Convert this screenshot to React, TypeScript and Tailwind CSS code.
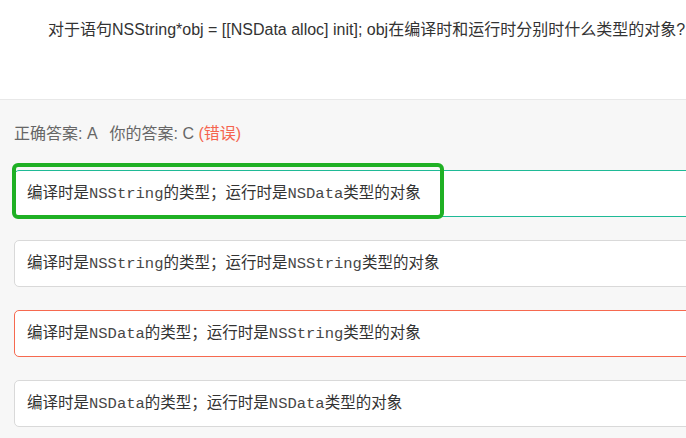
import React from 'react';

interface Option {
  compile: string;
  runtime: string;
  state: 'correct' | 'wrong' | 'normal';
}

const OPTIONS: Option[] = [
  { compile: 'NSString', runtime: 'NSData', state: 'correct' },
  { compile: 'NSString', runtime: 'NSString', state: 'normal' },
  { compile: 'NSData', runtime: 'NSString', state: 'wrong' },
  { compile: 'NSData', runtime: 'NSData', state: 'normal' },
];

const sans = 'font-["Liberation_Sans","Noto_Sans_CJK_SC",sans-serif]';

const Code: React.FC<{ children: React.ReactNode }> = ({ children }) => (
  <span className='font-["Liberation_Mono","Noto_Sans_CJK_SC",monospace] text-[15.5px] text-[#484848]'>{children}</span>
);

const OptionCard: React.FC<{ option: Option }> = ({ option }) => {
  const border =
    option.state === 'correct'
      ? 'border-[#1fba96]'
      : option.state === 'wrong'
        ? 'border-[#f6694f]'
        : 'border-[#d9d9d9]';

  return (
    <div className={`relative h-[47px] flex items-center px-[12px] bg-white border rounded-[5px] ${border}`}>
      <span className="text-[15.5px] text-[#333] leading-none whitespace-nowrap">
        编译时是<Code>{option.compile}</Code>的类型；运行时是<Code>{option.runtime}</Code>类型的对象
      </span>
      {/* highlight frame over the right answer */}
      {option.state === 'correct' && (
        <div className="absolute left-[-3px] top-[-8px] w-[432px] h-[56px] border-[4px] border-[#1fb024] rounded-[6px] pointer-events-none" />
      )}
    </div>
  );
};

export default function App() {
  return (
    <div className={`w-full h-[438px] overflow-hidden bg-[#f7f7f7] ${sans}`}>
      {/* Question */}
      <div className="h-[100px] bg-white border-b border-[#e8e8e8] pl-[48px] pt-[18px]">
        <p className="text-[16px] leading-[24px] text-[#333] whitespace-nowrap">
          对于语句NSString*obj = [[NSData alloc] init]; obj在编译时和运行时分别时什么类型的对象?
        </p>
      </div>

      {/* Result */}
      <div className="pl-[14px] pt-[22px]">
        <p className="text-[16px] leading-[24px] text-[#666] whitespace-nowrap">
          正确答案: A<span className="ml-[12px]">你的答案: C</span>{' '}
          <span className="text-[#f5644e]">(错误)</span>
        </p>
      </div>

      {/* Options */}
      <div className="ml-[14px] w-[720px] mt-[24px] flex flex-col gap-[23px]">
        {OPTIONS.map((o, i) => (
          <OptionCard key={i} option={o} />
        ))}
      </div>
    </div>
  );
}
